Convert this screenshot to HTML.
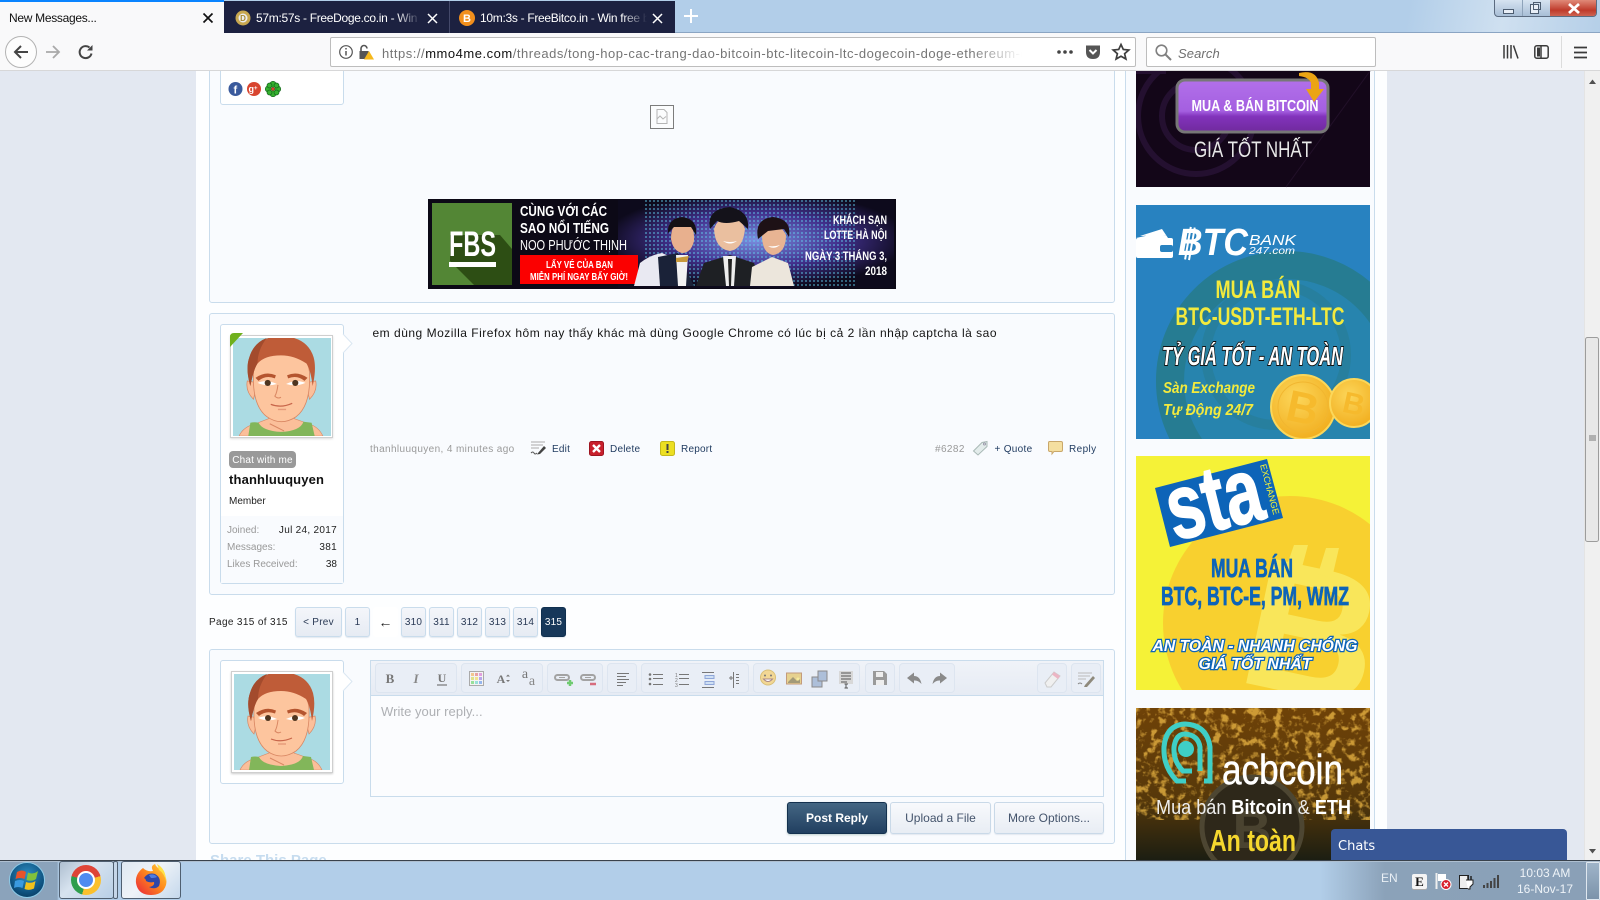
<!DOCTYPE html>
<html><head><meta charset="utf-8">
<style>
*{box-sizing:border-box;margin:0;padding:0}
html,body{width:1600px;height:900px;overflow:hidden;background:#e3e8f1;font-family:"Liberation Sans",Arial,sans-serif;}
.a{position:absolute;white-space:nowrap}
.box{position:absolute;background:#f9fbfe;border:1px solid #c9dcec;border-radius:3px}
.ubox{position:absolute;background:#fff;border:1px solid #c9dcec;border-radius:3px}
.pg{position:absolute;top:607px;height:30px;width:25px;border:1px solid #c9dcec;border-radius:3px;background:linear-gradient(#f4f6fa,#e6ebf3);text-align:center;font-size:11px;line-height:29px;color:#2a3a55;box-shadow:0 1px 1px #e2e8f0;letter-spacing:.15px}
.tg{position:absolute;top:663px;height:30px;border:1px solid #dde5f0;border-radius:4px;background:#e9eef6}
.btn{position:absolute;top:802px;height:32px;border:1px solid #c9d9e8;border-radius:3px;background:linear-gradient(#f8f9fc,#e8edf4);text-align:center;font-size:12px;line-height:30px;color:#44546c;box-shadow:0 1px 1px #e2e8f0}
svg{position:absolute;overflow:visible}
.n{font-family:"Liberation Sans Narrow","Liberation Sans",sans-serif}
.m{font-size:10px;line-height:14px;letter-spacing:.22px;color:#1f3a5f;top:443px}
</style></head><body>

<svg width="0" height="0" style="position:absolute"><defs>
<symbol id="av" viewBox="0 0 96 96" overflow="hidden">
<rect width="96" height="96" fill="#abdbe3"/>
<path d="M6 96Q10 87 22 84L35 79V66H60V79L74 84Q84 87 88 96Z" fill="#fbbf9a" stroke="#d98763" stroke-width=".6"/>
<path d="M15 96L17 83Q21 82 25 83Q29 91 47 92Q66 91 69 82L77 83L80 96Z" fill="#82b65a"/>
<path d="M36 84L50 91" stroke="#d98763" fill="none"/>
<path d="M14 42Q12 52 20 60L24 44ZM81 42Q83 52 75 60L71 44Z" fill="#fbbf9a" stroke="#d98763" stroke-width=".7"/>
<path d="M20 36Q19 66 33 77Q47 87 62 77Q76 66 75 36Q75 14 47 14Q20 14 20 36Z" fill="#fdc59e" stroke="#d98763" stroke-width=".8"/>
<path d="M17 47Q12 30 16 19Q22 -1 47 -2Q73 -1 79 19Q82 30 78 47Q76 31 72 25Q60 17 47 17Q31 17 24 25Q20 31 17 47Z" fill="#bf5c38"/>
<path d="M17 47Q12 30 16 19Q20 5 33 0Q24 12 24 25Q20 31 17 47Z" fill="#a34b2d"/>
<path d="M22 39Q32 32 42 36.500L41 39.500Q32 36 25 42ZM73 39Q63 32 53 36.500L54 39.500Q63 36 70 42Z" fill="#b5552f"/>
<path d="M24 44Q33 40 43 45Q33 48 24 44ZM71 44Q62 40 52 45Q62 48 71 44Z" fill="#fff"/>
<circle cx="34" cy="44" r="3" fill="#4e3520"/><circle cx="61" cy="44" r="3" fill="#4e3520"/>
<path d="M44 46Q43 54 41 57Q44 60 47 58" fill="none" stroke="#d98763"/>
<path d="M37 65Q47 69 58 64" fill="none" stroke="#c8664a" stroke-width="1.200"/>
<path d="M44 70H52" stroke="#e59a7a" stroke-width="1.400"/>
</symbol>
</defs></svg>

<!-- page content -->
<div class="a" style="left:196px;top:71px;width:1191px;height:789px;background:#fdfeff"></div>
<div class="box" style="left:209px;top:40px;width:906px;height:263px"></div>
<div class="ubox" style="left:220px;top:40px;width:124px;height:65px"></div>
<svg style="left:228px;top:81px" width="60" height="16">
<circle cx="7.500" cy="8" r="7" fill="#3a5a9c"/><text x="5.500" y="12.500" font-size="11" font-weight="bold" fill="#fff" font-family="Liberation Sans">f</text>
<circle cx="26" cy="8" r="7" fill="#d8452f"/><text x="20.500" y="11" font-size="9" font-weight="bold" fill="#fff" font-family="Liberation Sans">g<tspan font-size="6" dy="-2">+</tspan></text>
<g fill="#35b02f" stroke="#12651a" stroke-width=".7"><circle cx="45" cy="3.300" r="3"/><circle cx="45" cy="12.700" r="3"/><circle cx="40.300" cy="8" r="3"/><circle cx="49.700" cy="8" r="3"/><circle cx="41.500" cy="4.500" r="2.500"/><circle cx="48.500" cy="4.500" r="2.500"/><circle cx="41.500" cy="11.500" r="2.500"/><circle cx="48.500" cy="11.500" r="2.500"/></g><circle cx="45" cy="8" r="1.600" fill="#d8452f"/>
</svg>
<div class="a" style="left:650px;top:105px;width:24px;height:24px;border:1px solid #7c7c7c;background:#fbfcfd"></div>
<svg style="left:655px;top:109px" width="14" height="16" fill="none" stroke="#b5b5b5"><path d="M2 .5H9L12 3.500V14.500H2ZM2 10L5 7L8 10L11 7.500"/></svg>

<!-- FBS banner -->
<svg style="left:428px;top:199px" width="468" height="90" viewBox="0 0 468 90" font-family="Liberation Sans">
<defs><radialGradient id="fb" cx=".5" cy=".45" r=".55"><stop offset="0" stop-color="#7a8fe0"/><stop offset=".55" stop-color="#41308c"/><stop offset="1" stop-color="#0d0a1c"/></radialGradient>
<pattern id="dots" width="4" height="4" patternUnits="userSpaceOnUse"><circle cx="2" cy="2" r=".95" fill="#63d0f0" opacity=".8"/></pattern></defs>
<rect width="468" height="90" fill="#0c0916"/>
<rect x="190" y="1" width="276" height="88" fill="url(#fb)"/>
<rect x="216" y="1" width="212" height="88" fill="url(#dots)" opacity=".8"/>
<rect x="4" y="4" width="80" height="82" fill="#538635"/>
<path d="M22 36L72 36L84 50V86H46L22 62Z" fill="#2d4e14"/>
<text x="21" y="57" font-size="35" font-weight="bold" fill="#fff" class="n" textLength="47" lengthAdjust="spacingAndGlyphs">FBS</text>
<rect x="21" y="63" width="47" height="5" fill="#fff"/>
<g fill="#fff" class="n">
<text x="92" y="17" font-size="15" font-weight="bold" textLength="87" lengthAdjust="spacingAndGlyphs">CÙNG VỚI CÁC</text>
<text x="92" y="34" font-size="15" font-weight="bold" textLength="89" lengthAdjust="spacingAndGlyphs">SAO NỔI TIẾNG</text>
<text x="92" y="51" font-size="15" textLength="107" lengthAdjust="spacingAndGlyphs">NOO PHƯỚC THỊNH</text>
</g>
<rect x="92" y="56" width="118" height="29" fill="#fb0000"/>
<g fill="#fff" font-size="10" font-weight="bold" class="n">
<text x="118" y="69" textLength="67" lengthAdjust="spacingAndGlyphs">LẤY VÉ CỦA BẠN</text><text x="102" y="81" textLength="98" lengthAdjust="spacingAndGlyphs">MIỄN PHÍ NGAY BẤY GIỜ!</text></g>
<!-- people -->
<path d="M206 87L212 64Q222 56 234 54L248 60L250 87Z" fill="#e9e9f2"/>
<path d="M230 58L250 54L266 87H232Z" fill="#1a2238"/>
<path d="M248 56L260 56L258 87H250Z" fill="#f2f2f2"/>
<path d="M243 40Q243 22 255 22Q267 24 266 42Q263 54 254 54Q245 52 243 40Z" fill="#e8b08e"/><path d="M240 34Q239 20 254 18Q270 20 268 36L263 28H246Z" fill="#141014"/>
<path d="M248 59L261 57L259 63L248 63Z" fill="#c99a3c"/>
<path d="M268 87L276 64L302 56L326 64L336 87Z" fill="#1e2024"/>
<path d="M295 57L308 57L306 87H298Z" fill="#eee"/><path d="M300 60H304L303 87H301Z" fill="#222"/>
<path d="M286 30Q287 50 302 52Q315 50 317 30Q313 18 301 18Q290 18 286 30Z" fill="#eabf9f"/><path d="M282 30Q278 10 302 8Q322 12 320 30L311 22Q297 26 289 22Z" fill="#14121a"/>
<path d="M295 42Q302 47 309 42Q302 44 295 42Z" fill="#fff"/>
<path d="M322 87L324 68L344 58L360 64L366 87Z" fill="#ece6dc"/>
<path d="M334 36Q334 54 345 56Q358 54 358 36Q353 26 345 26Q338 26 334 36Z" fill="#e8b493"/><path d="M330 40Q326 20 345 18Q364 20 361 38L356 30L340 32Z" fill="#1d1116"/>
<path d="M340 47Q346 51 352 46Q346 48 340 47Z" fill="#fff"/>
<g fill="#fff" font-size="12" font-weight="bold" class="n">
<text x="405" y="25" textLength="54" lengthAdjust="spacingAndGlyphs">KHÁCH SẠN</text><text x="396" y="40" textLength="63" lengthAdjust="spacingAndGlyphs">LOTTE HÀ NỘI</text><text x="377" y="61" textLength="82" lengthAdjust="spacingAndGlyphs">NGÀY 3 THÁNG 3,</text><text x="437" y="76" textLength="22" lengthAdjust="spacingAndGlyphs">2018</text></g>
</svg>

<!-- post -->
<div class="box" style="left:209px;top:313px;width:906px;height:282px"></div>
<div class="ubox" style="left:220px;top:324px;width:124px;height:260px"></div>
<div class="a" style="left:221px;top:516px;width:122px;height:67px;background:#f9fbfe"></div>
<svg style="left:343px;top:334px" width="10" height="20"><path d="M0 0L9 9.500L0 19" fill="#fff" stroke="#dbe7f2"/></svg>
<div class="a" style="left:230px;top:335px;width:103px;height:103px;background:#fff;border:1px solid #cfcfcf;box-shadow:0 1px 2px #ddd"></div>
<svg style="left:233px;top:338px" width="98" height="98"><use href="#av" width="98" height="98"/></svg>
<svg style="left:230px;top:333px" width="14" height="14"><path d="M0 14V4Q0 0 4 0H13Z" fill="#6fb01d"/></svg>
<div class="a" style="left:229px;top:451px;width:67px;height:17px;background:#999;border-radius:4px;color:#fff;font-size:10px;line-height:19px;text-align:center;letter-spacing:.18px">Chat with me</div>
<div class="a" style="left:229px;top:472px;font-size:13px;font-weight:bold;line-height:16px;color:#111;letter-spacing:.15px">thanhluuquyen</div>
<div class="a" style="left:229px;top:495px;font-size:10px;line-height:13px;color:#222">Member</div>
<div class="a" style="left:227px;top:524px;font-size:10px;line-height:13px;color:#999">Joined:</div>
<div class="a" style="left:227px;top:541px;font-size:10px;line-height:13px;color:#999">Messages:</div>
<div class="a" style="left:227px;top:558px;font-size:10px;line-height:13px;color:#999">Likes Received:</div>
<div class="a" style="right:1263px;top:524px;font-size:10px;line-height:13px;color:#222;letter-spacing:.3px">Jul 24, 2017</div>
<div class="a" style="right:1263px;top:541px;font-size:10px;line-height:13px;color:#222;letter-spacing:.3px">381</div>
<div class="a" style="right:1263px;top:558px;font-size:10px;line-height:13px;color:#222">38</div>

<div class="a" style="left:372.500px;top:325px;font-size:12px;line-height:16px;color:#141414;letter-spacing:.505px;">em dùng Mozilla Firefox hôm nay thấy khác mà dùng Google Chrome có lúc bị cả 2 lần nhập captcha là sao</div>

<div class="a m" style="left:370px;color:#9a9a9a;letter-spacing:.38px">thanhluuquyen, 4 minutes ago</div>
<svg style="left:530px;top:441px" width="17" height="14"><path d="M1 1H15M1 4H13M1 7H9" stroke="#aaa"/><path d="M1 12Q3 10 4 12T7 12" fill="none" stroke="#555"/><path d="M8 12L14 5L16 7L10 13L7 13.500Z" fill="#444"/></svg>
<div class="a m" style="left:552px">Edit</div>
<svg style="left:589px;top:441px" width="15" height="15"><rect width="14" height="14" x=".5" y=".5" rx="2" fill="#c8202c" stroke="#9e1420"/><path d="M4 4L11 11M11 4L4 11" stroke="#fff" stroke-width="2.400"/></svg>
<div class="a m" style="left:610px">Delete</div>
<svg style="left:660px;top:441px" width="15" height="15"><rect width="14" height="14" x=".5" y=".5" rx="2" fill="#ecdf22" stroke="#c4b81c"/><rect x="6.500" y="3" width="2" height="6" fill="#444"/><rect x="6.500" y="10" width="2" height="2" fill="#444"/></svg>
<div class="a m" style="left:681px">Report</div>

<div class="a m" style="left:935px;color:#999;letter-spacing:.4px">#6282</div>
<svg style="left:972px;top:440px" width="17" height="16"><path d="M1.500 11L10 2.500L15 1.500L15 6.500L6 15Z" fill="#e3eceb" stroke="#a9b9b6"/><circle cx="12.500" cy="4" r="1" fill="#fff" stroke="#99a"/></svg>
<div class="a m" style="left:994.500px;letter-spacing:.3px">+ Quote</div>
<svg style="left:1048px;top:441px" width="15" height="14"><path d="M1.500 .5H13Q14.500 .5 14.500 2V9Q14.500 10.500 13 10.500H6L4 13V10.500H2Q.5 10.500 .5 9V2Q.5 .5 1.500 .5Z" fill="#f5dfa0" stroke="#c9a76a"/></svg>
<div class="a m" style="left:1069px;letter-spacing:.4px">Reply</div>

<!-- pager -->
<div class="a" style="left:209px;top:614px;font-size:10px;line-height:18px;color:#222;letter-spacing:.36px">Page 315 of 315</div>
<div class="pg" style="left:295px;width:47px;font-size:10px;letter-spacing:.25px">&lt; Prev</div>
<div class="pg" style="left:345px;font-size:10px">1</div>
<div class="pg" style="left:373px;background:#fff;border-color:#fff;box-shadow:none;font-size:14px;color:#222;font-weight:bold">←</div>
<div class="pg" style="left:401px;font-size:10px">310</div>
<div class="pg" style="left:429px;font-size:10px">311</div>
<div class="pg" style="left:457px;font-size:10px">312</div>
<div class="pg" style="left:485px;font-size:10px">313</div>
<div class="pg" style="left:513px;font-size:10px">314</div>
<div class="pg" style="left:541px;background:#17385a;border-color:#10304f;color:#fff;font-size:10px">315</div>

<!-- reply -->
<div class="box" style="left:209px;top:649px;width:906px;height:195px"></div>
<div class="ubox" style="left:220px;top:660px;width:124px;height:124px"></div>
<svg style="left:343px;top:672px" width="10" height="20"><path d="M0 0L9 9.500L0 19" fill="#fff" stroke="#dbe7f2"/></svg>
<div class="a" style="left:231px;top:671px;width:102px;height:102px;background:#fff;border:1px solid #cfcfcf;box-shadow:0 1px 2px #ccc"></div>
<svg style="left:234px;top:674px" width="96" height="96"><use href="#av" width="96" height="96"/></svg>
<div class="a" style="left:370px;top:660px;width:734px;height:137px;background:#fbfcfe;border:1px solid #c9dcec"></div>
<div class="a" style="left:371px;top:661px;width:732px;height:35px;background:linear-gradient(#f0f3f8,#e6ebf4);border-bottom:1px solid #c9dcec"></div>
<div class="tg" style="left:375px;width:82px"></div>
<div class="tg" style="left:461px;width:82px"></div>
<div class="tg" style="left:547px;width:56px"></div>
<div class="tg" style="left:607px;width:30px"></div>
<div class="tg" style="left:641px;width:108px"></div>
<div class="tg" style="left:753px;width:107px"></div>
<div class="tg" style="left:865px;width:30px"></div>
<div class="tg" style="left:899px;width:56px"></div>
<div class="tg" style="left:1037px;width:30px"></div>
<div class="tg" style="left:1071px;width:30px"></div>
<svg style="left:0;top:0" width="1600" height="900" font-family="Liberation Serif">
<text x="390" y="683" font-size="13" font-weight="bold" fill="#777" text-anchor="middle">B</text>
<text x="416" y="683" font-size="13" font-style="italic" font-weight="bold" fill="#888" text-anchor="middle">I</text>
<text x="442" y="682" font-size="12" font-weight="bold" fill="#777" text-anchor="middle">U</text><path d="M437 685H447" stroke="#777" stroke-width="1.200"/>
<rect x="469.500" y="671.500" width="14" height="14" fill="#f4f4f4" stroke="#aaa"/>
<g><rect x="471" y="673" width="3" height="3" fill="#f2c78f"/><rect x="475" y="673" width="3" height="3" fill="#e9a3a3"/><rect x="479" y="673" width="3" height="3" fill="#e2a0df"/><rect x="471" y="677" width="3" height="3" fill="#dfe28a"/><rect x="475" y="677" width="3" height="3" fill="#f3e38f"/><rect x="479" y="677" width="3" height="3" fill="#b8a6ea"/><rect x="471" y="681" width="3" height="3" fill="#98e09a"/><rect x="475" y="681" width="3" height="3" fill="#9ae0d8"/><rect x="479" y="681" width="3" height="3" fill="#95b6ee"/></g>
<text x="501" y="683" font-size="12" font-weight="bold" fill="#777" text-anchor="middle">A</text><path d="M506 676.500L508 674.500L510 676.500M506 680L508 682L510 680" fill="#777"/>
<text x="525" y="678" font-size="14" fill="#777" text-anchor="middle">a</text><text x="532" y="685" font-size="14" fill="#888" text-anchor="middle">a</text>
<g fill="none" stroke="#a3a3a3" stroke-width="2"><rect x="555" y="675" width="14" height="5" rx="2.500"/><rect x="581" y="675" width="14" height="5" rx="2.500"/><path d="M559 677.500H565M585 677.500H591" stroke-width="1"/></g>
<path d="M570 680V686M567 683H573" stroke="#6fcb70" stroke-width="2.500"/>
<path d="M590 684H596" stroke="#d76d7e" stroke-width="2.500"/>
<g stroke="#777"><path d="M617 673.500H629M617 676.500H626M617 679.500H629M617 682.500H626M617 685.500H623" fill="none"/>
<path d="M653 674.500H663M653 678.500H663M653 684.500H663M679 674.500H689M679 678.500H689M679 684.500H689M702 672.500H714M702 687.500H714M736 674.500H739M736 677.500H739M736 680.500H739M736 683.500H739" fill="none"/>
<path d="M729 678H733M731 676V680M733.500 672V688" fill="none"/></g>
<g fill="#777"><circle cx="650" cy="674.500" r="1.300"/><circle cx="650" cy="679" r="1.300"/><circle cx="650" cy="684" r="1.300"/></g>
<g font-family="Liberation Sans" font-size="5" fill="#777"><text x="675" y="677">1</text><text x="675" y="682">2</text><text x="675" y="687">3</text></g>
<path d="M705 675.500H714V678.500H705ZM705 681.500H714V684.500H705Z" fill="#cfe0f4" stroke="#8fa6d8"/>
<circle cx="768" cy="677.500" r="7.500" fill="#f2d795" stroke="#d9c078"/><circle cx="765" cy="675.500" r="1" fill="#777"/><circle cx="771" cy="675.500" r="1" fill="#777"/><path d="M763.500 679Q768 684 772.500 679Z" fill="#fff" stroke="#a88"/>
<rect x="786.500" y="673" width="15" height="11" fill="#e6d18f" stroke="#c39b7c"/><path d="M788 682L793 677L797 681L800 679V683H788Z" fill="#a39a78"/><circle cx="798" cy="679" r="1.500" fill="#f6eb9c"/>
<rect x="812" y="677" width="10" height="10" fill="#adbfd9" stroke="#8a8a8a"/><rect x="818" y="671" width="9" height="10" fill="#adbfd9" stroke="#8a8a8a"/>
<rect x="839" y="671" width="14" height="13" fill="#d8d8d8"/><path d="M841 673H851M841 676H851M841 679H851M841 682H847" stroke="#555"/><path d="M846 684V688M844.500 684H848M844.500 688H848" stroke="#555"/>
<path d="M873 671H884L887 674V685H873Z" fill="#9a9a9a"/><rect x="876" y="672" width="7" height="5" fill="#eee"/><rect x="876" y="680" width="8" height="5" fill="#eee"/>
<path d="M907 678L914 672.500V676Q920 676 921.500 684Q918 680 914 680.500V683.500Z" fill="#8a8a8a"/>
<path d="M947 678L940 672.500V676Q934 676 932.500 684Q936 680 940 680.500V683.500Z" fill="#8a8a8a"/>
<path d="M1045 683L1054 672L1060 676L1051 687H1047Z" fill="#f0f0f0" stroke="#ccc"/><path d="M1052 674.500L1054 672L1060 676L1058 679Z" fill="#ecb5c4"/>
<path d="M1078 673H1092M1078 676H1090M1078 679H1086" stroke="#bbb" fill="none"/><path d="M1078 684Q1080 682 1082 684" fill="none" stroke="#888"/><path d="M1085 685L1093 676L1095 678L1087 687L1084 687Z" fill="#8f8a7c"/>
</svg>
<div class="a" style="left:381px;top:704px;font-size:13px;line-height:16px;color:#aeb0b4;letter-spacing:.05px">Write your reply...</div>
<div class="btn" style="left:787px;width:100px;background:linear-gradient(#446683,#213f60);border-color:#14314f;color:#fff;font-weight:bold;box-shadow:0 1px 2px #bcc">Post Reply</div>
<div class="btn" style="left:890px;width:101px">Upload a File</div>
<div class="btn" style="left:994px;width:110px">More Options...</div>
<div class="a" style="left:210px;top:853px;font-size:15px;line-height:16px;font-weight:bold;color:#c6dcef">Share This Page</div>

<!-- sidebar -->
<div class="a" style="left:1125px;top:71px;width:250px;height:789px;background:#f9fbfe;border-left:1px solid #c9dcec;border-right:1px solid #c9dcec"></div>

<!-- banner 1 -->
<svg style="left:1136px;top:71px" width="234" height="116" viewBox="0 0 234 116" font-family="Liberation Sans">
<defs><clipPath id="c1"><rect width="234" height="116"/></clipPath><linearGradient id="pb" x1="0" y1="0" x2="0" y2="1"><stop offset="0" stop-color="#b270ea"/><stop offset=".6" stop-color="#a45fe0"/><stop offset=".7" stop-color="#8233bb"/><stop offset="1" stop-color="#702a9e"/></linearGradient></defs>
<rect width="234" height="116" fill="#130618"/>
<g clip-path="url(#c1)" fill="none" stroke="#241030" stroke-width="6"><circle cx="60" cy="45" r="58"/><circle cx="60" cy="45" r="34"/><path d="M0 0H30"/></g>
<path d="M150 116L234 0" stroke="#221029"/>
<rect x="41" y="9" width="151" height="52" rx="8" fill="url(#pb)" stroke="#777" stroke-width="3"/>
<text x="119" y="40" font-size="16" font-weight="bold" fill="#fff" text-anchor="middle" class="n" textLength="127" lengthAdjust="spacingAndGlyphs">MUA &amp; BÁN BITCOIN</text>
<path d="M163 2Q180 -2 183 12V18H188L178 31L170 18H175V12Q173 6 163 5Z" fill="#eba413"/>
<text x="117" y="86" font-size="22" fill="#e8e8e8" text-anchor="middle" class="n" textLength="118" lengthAdjust="spacingAndGlyphs">GIÁ TỐT NHẤT</text>
</svg>

<!-- banner 2 -->
<svg style="left:1136px;top:205px" width="234" height="234" viewBox="0 0 234 234" font-family="Liberation Sans">
<defs><clipPath id="c2"><rect width="234" height="234"/></clipPath>
<radialGradient id="coin" cx=".4" cy=".35" r=".7"><stop offset="0" stop-color="#fcd65a"/><stop offset="1" stop-color="#f1ad1d"/></radialGradient></defs>
<rect width="234" height="234" fill="#2882c0"/>
<g clip-path="url(#c2)">
<circle cx="150" cy="176" r="130" fill="#2784ae"/>
<circle cx="150" cy="176" r="116" fill="none" stroke="#267c92" stroke-width="28"/>
<circle cx="140" cy="150" r="70" fill="none" stroke="#277f9e" stroke-width="10"/>
<circle cx="167" cy="202" r="32" fill="url(#coin)" stroke="#fbd75a" stroke-width="2"/>
<circle cx="167" cy="202" r="25" fill="none" stroke="#f1b630"/>
<circle cx="218" cy="198" r="24" fill="url(#coin)" stroke="#fbd75a" stroke-width="2"/>
<text x="167" y="218" font-size="44" font-weight="bold" fill="#f6ba2d" text-anchor="middle" transform="rotate(12 167 202)">B</text>
<text x="218" y="209" font-size="30" font-weight="bold" fill="#f6ba2d" text-anchor="middle" transform="rotate(12 218 198)">B</text>
</g>
<path d="M4 31L26 24L30 30ZM0 33L28 27L32 33Z" fill="#fff"/>
<rect x="0" y="33" width="37" height="20" rx="2" fill="#fff"/><rect x="24" y="40" width="13" height="7" rx="2" fill="#2882c0"/>
<text x="42" y="50" font-size="38" font-weight="bold" font-style="italic" fill="#fff" textLength="70" lengthAdjust="spacingAndGlyphs">BTC</text>
<path d="M52 22V55M56 22V55" stroke="#fff" stroke-width="2" transform="rotate(10 54 38)"/>
<text x="113" y="40" font-size="15" fill="#fff" font-style="italic" textLength="47" lengthAdjust="spacingAndGlyphs">BANK</text>
<text x="113" y="49" font-size="10" fill="#fff" font-style="italic" textLength="46" lengthAdjust="spacingAndGlyphs">247.com</text>
<g fill="#f3ea3d" font-weight="bold" class="n" text-anchor="middle"><text x="122" y="93" font-size="25" textLength="85" lengthAdjust="spacingAndGlyphs">MUA BÁN</text>
<text x="124" y="120" font-size="25" textLength="169" lengthAdjust="spacingAndGlyphs">BTC-USDT-ETH-LTC</text></g>
<text x="26" y="160" font-size="26" font-weight="bold" font-style="italic" fill="#fff" stroke="#111" stroke-width="2" paint-order="stroke" class="n" textLength="181" lengthAdjust="spacingAndGlyphs">TỶ GIÁ TỐT - AN TOÀN</text>
<g fill="#f3ea3d" font-weight="bold" font-style="italic" font-size="16" class="n"><text x="27" y="188" textLength="92" lengthAdjust="spacingAndGlyphs">Sàn Exchange</text><text x="27" y="210" textLength="90" lengthAdjust="spacingAndGlyphs">Tự Động 24/7</text></g>
</svg>

<!-- banner 3 -->
<svg style="left:1136px;top:456px" width="234" height="234" viewBox="0 0 234 234" font-family="Liberation Sans">
<defs><clipPath id="c3"><rect width="234" height="234"/></clipPath></defs>
<rect width="234" height="234" fill="#f5f237"/>
<g clip-path="url(#c3)"><circle cx="154" cy="167" r="127" fill="#f8d02f"/>
<text x="178" y="240" font-size="185" font-weight="bold" fill="#f9e65a" text-anchor="middle" transform="rotate(12 178 170)">B</text>
<path d="M150 112L158 89H172L165 115ZM182 118L190 92H203L196 122Z" fill="#f9e65a"/></g>
<path d="M19 32L131 3L147 62L34 91Z" fill="#0d64b8"/>
<text x="79" y="74" font-size="92" font-weight="bold" fill="#fff" stroke="#fff" stroke-width="1.500" text-anchor="middle" transform="rotate(-14 79 49)" textLength="96" lengthAdjust="spacingAndGlyphs">sta</text>
<text x="124" y="9" font-size="9" fill="#f5f237" transform="rotate(75 124 9)" textLength="52" lengthAdjust="spacingAndGlyphs">EXCHANGE</text>
<g fill="#0d64b8" stroke="#0d64b8" stroke-width=".7" font-weight="bold" class="n" text-anchor="middle"><text x="116" y="121" font-size="26" textLength="82" lengthAdjust="spacingAndGlyphs">MUA BÁN</text><text x="119" y="149" font-size="26" textLength="188" lengthAdjust="spacingAndGlyphs">BTC, BTC-E, PM, WMZ</text></g>
<g fill="#fff" stroke="#0d64b8" stroke-width="2.500" paint-order="stroke" font-weight="bold" font-style="italic" font-size="16" text-anchor="middle"><text x="119" y="195" textLength="205" lengthAdjust="spacingAndGlyphs">AN TOÀN - NHANH CHÓNG</text><text x="119" y="213" textLength="113" lengthAdjust="spacingAndGlyphs">GIÁ TỐT NHẤT</text></g>
</svg>

<!-- banner 4 -->
<svg style="left:1136px;top:708px" width="234" height="152" viewBox="0 0 234 152" font-family="Liberation Sans">
<defs><filter id="nz" x="0" y="0" width="100%" height="100%"><feTurbulence type="fractalNoise" baseFrequency=".13" numOctaves="3" seed="4"/><feColorMatrix values="0 0 0 0 .85  0 0 0 0 .48  0 0 0 0 .06  3.500 3.500 0 0 -3.500"/></filter>
<linearGradient id="bg4" x1="0" y1="0" x2="0" y2="1"><stop offset="0" stop-color="#6f4208"/><stop offset=".6" stop-color="#56380a"/><stop offset="1" stop-color="#1c1e12"/></linearGradient>
<clipPath id="c4"><rect width="234" height="152"/></clipPath></defs>
<rect width="234" height="152" fill="url(#bg4)"/>
<g clip-path="url(#c4)"><rect x="0" y="0" width="234" height="112" filter="url(#nz)" opacity=".75"/>
<circle cx="116" cy="119" r="50" fill="#2e281a" stroke="#4d4632" stroke-width="5"/><text x="116" y="140" font-size="54" font-weight="bold" fill="#4a4330" text-anchor="middle">B</text></g>
<g transform="translate(21 1)"><g fill="none" stroke="#3fcfc6" stroke-width="5"><path d="M29 72H20Q6 58 7 38Q9 16 28 15Q50 16 53 38V72H47"/><path d="M35 62H26Q16 52 17 38Q19 25 28 25Q41 26 43 38V62"/></g><circle cx="29" cy="40" r="8" fill="#3fcfc6"/></g>
<text x="86" y="76" font-size="42" fill="#fff" stroke="#fff" stroke-width=".5" textLength="121" lengthAdjust="spacingAndGlyphs">acbcoin</text>
<text x="20" y="106" font-size="20" fill="#eee" textLength="195" lengthAdjust="spacingAndGlyphs">Mua bán <tspan font-weight="bold" fill="#fff">Bitcoin</tspan> &amp; <tspan font-weight="bold" fill="#fff">ETH</tspan></text>
<text x="117" y="143" font-size="31" font-weight="bold" fill="#f5d72e" text-anchor="middle" class="n" textLength="86" lengthAdjust="spacingAndGlyphs">An toàn</text>
</svg>

<!-- chats -->
<div class="a" style="left:1331px;top:829px;width:236px;height:31px;background:#385796;border-radius:4px 4px 0 0;color:#fff;font-family:'DejaVu Sans',sans-serif;font-size:13px;line-height:36px;padding-left:7px">Chats</div>

<!-- scrollbar -->
<div class="a" style="left:1584px;top:71px;width:16px;height:789px;background:#f0f0f0;border-left:1px solid #e4e4e4"></div>
<svg style="left:1584px;top:71px" width="16" height="789"><path d="M5 13L8.500 8.500L12 13Z" fill="#505050"/><path d="M5 778H12L8.500 782.500Z" fill="#505050"/>
<rect x="1.500" y="266.500" width="13" height="204" rx="2" fill="#e8e8e8" stroke="#9c9c9c"/><path d="M5 365H12M5 367H12M5 369H12" stroke="#777"/></svg>

<!-- browser chrome -->
<div class="a" style="left:0;top:0;width:1600px;height:33px;background:#b2cee9;border-bottom:1px solid #8ba5c3"></div>
<div class="a" style="left:1250px;top:0;width:350px;height:32px;background:linear-gradient(100deg,#b2cee9 45%,#cfe0f0 72%,#b5cfe8)"></div>
<div class="a" style="left:0;top:0;width:224px;height:34px;background:#f9f9fa;border-top:2px solid #0a84ff"></div>
<div class="a" style="left:224px;top:1px;width:451px;height:32px;background:#1c2140"></div>
<div class="a" style="left:449px;top:1px;width:1px;height:32px;background:#44496a"></div>
<div class="a" style="left:9px;top:10px;font-size:12px;line-height:16px;color:#111;letter-spacing:-.3px">New Messages...</div>
<svg style="left:202px;top:12px" width="12" height="12"><path d="M1.500 1.500L10.500 10.500M10.500 1.500L1.500 10.500" stroke="#111" stroke-width="1.700"/></svg>
<svg style="left:235px;top:10px" width="16" height="16"><circle cx="8" cy="8" r="7.500" fill="#c8a850"/><circle cx="8" cy="8" r="4.500" fill="#eee"/><text x="8" y="11" font-size="8" font-weight="bold" text-anchor="middle" fill="#a88a30" font-family="Liberation Sans">D</text></svg>
<div class="a" style="left:256px;top:10px;width:165px;overflow:hidden;font-size:12px;line-height:16px;color:#fff;letter-spacing:-.3px;-webkit-mask-image:linear-gradient(90deg,#000 85%,transparent)">57m:57s - FreeDoge.co.in - Win free</div>
<svg style="left:427px;top:13px" width="11" height="11"><path d="M1 1L10 10M10 1L1 10" stroke="#fff" stroke-width="1.500"/></svg>
<svg style="left:459px;top:10px" width="16" height="16"><circle cx="8" cy="8" r="8" fill="#f28f1c"/><text x="8" y="12" font-size="11" font-weight="bold" text-anchor="middle" fill="#fff" font-family="Liberation Sans">B</text></svg>
<div class="a" style="left:480px;top:10px;width:167px;overflow:hidden;font-size:12px;line-height:16px;color:#fff;letter-spacing:-.3px;-webkit-mask-image:linear-gradient(90deg,#000 85%,transparent)">10m:3s - FreeBitco.in - Win free bitcoin</div>
<svg style="left:652px;top:13px" width="11" height="11"><path d="M1 1L10 10M10 1L1 10" stroke="#fff" stroke-width="1.500"/></svg>
<svg style="left:684px;top:9px" width="14" height="14"><path d="M7 0V14M0 7H14" stroke="#fff" stroke-width="2"/></svg>

<!-- window controls -->
<div class="a" style="left:1494px;top:-1px;width:103px;height:18px;border:1px solid #5b6b80;border-radius:0 0 4px 4px;background:linear-gradient(#d6e3f1,#a8bed6);overflow:hidden">
<div class="a" style="left:55px;top:0;width:47px;height:17px;background:linear-gradient(#e08a78,#bf3b2b 60%,#d06a58)"></div>
<div class="a" style="left:27px;top:0;width:1px;height:17px;background:#8ea3ba"></div>
</div>
<div class="a" style="left:1503px;top:9px;width:11px;height:5px;background:#e8eef6;border:1px solid #4c5c70"></div>
<div class="a" style="left:1530px;top:4px;width:9px;height:10px;background:#e8eef6;border:1px solid #4c5c70"></div>
<div class="a" style="left:1533px;top:2px;width:8px;height:8px;border:1px solid #4c5c70"></div>
<svg style="left:1567px;top:3px" width="14" height="11"><path d="M2 1L12 10M12 1L2 10" stroke="#fff" stroke-width="2.800"/></svg>

<div class="a" style="left:0;top:33px;width:1600px;height:38px;background:#f9f9fa;border-bottom:1px solid #d7d7d8"></div>
<div class="a" style="left:5px;top:36px;width:32px;height:32px;border-radius:50%;background:#fdfdfd;border:1px solid #b3b3b3"></div>
<svg style="left:13px;top:44px" width="16" height="16" fill="none" stroke="#444" stroke-width="2"><path d="M15 8H2M8 2L2 8L8 14"/></svg>
<svg style="left:45px;top:44px" width="16" height="16" fill="none" stroke="#a9a9a9" stroke-width="1.800"><path d="M1 8H14M8 2L14 8L8 14"/></svg>
<svg style="left:78px;top:44px" width="16" height="16" fill="none" stroke="#444" stroke-width="2"><path d="M13.500 9.500A6 6 0 1 1 11.500 3.500"/><path d="M14.500 1V6.500H9Z" fill="#444" stroke="none"/></svg>
<div class="a" style="left:330px;top:37px;width:806px;height:30px;background:#fff;border:1px solid #bdbdbd;border-radius:2px"></div>
<svg style="left:339px;top:45px" width="14" height="14"><circle cx="7" cy="7" r="6.300" fill="none" stroke="#555" stroke-width="1.200"/><path d="M7 6V10.500M7 3V4.500" stroke="#555" stroke-width="1.500"/></svg>
<svg style="left:358px;top:44px" width="16" height="16"><path d="M3 7V4.500A3 3 0 0 1 9 4.500" fill="none" stroke="#555" stroke-width="1.600"/><rect x="1.500" y="7" width="9" height="8" fill="#555"/><path d="M11 7L16 15.500H6Z" fill="#f5b81c"/></svg>
<div class="a" style="left:382px;top:45px;width:640px;overflow:hidden;font-size:13px;line-height:17px;color:#757575;letter-spacing:.52px;-webkit-mask-image:linear-gradient(90deg,#000 92%,transparent)">https://<span style="color:#111">mmo4me.com</span>/threads/tong-hop-cac-trang-dao-bitcoin-btc-litecoin-ltc-dogecoin-doge-ethereum-eth</div>
<svg style="left:1056px;top:49px" width="18" height="6" fill="#444"><circle cx="3" cy="3" r="1.800"/><circle cx="9" cy="3" r="1.800"/><circle cx="15" cy="3" r="1.800"/></svg>
<svg style="left:1085px;top:44px" width="16" height="16"><path d="M1 1.500H15V8Q15 15 8 15Q1 15 1 8Z" fill="#555"/><path d="M4.500 6L8 9.500L11.500 6" fill="none" stroke="#fff" stroke-width="2"/></svg>
<svg style="left:1112px;top:43px" width="18" height="18"><path d="M9 1.500L11.300 6.500L16.800 7L12.600 10.700L13.900 16L9 13.200L4.100 16L5.400 10.700L1.200 7L6.700 6.500Z" fill="none" stroke="#3e3e3e" stroke-width="1.700"/></svg>
<div class="a" style="left:1146px;top:37px;width:230px;height:30px;background:#fff;border:1px solid #bdbdbd;border-radius:2px"></div>
<svg style="left:1155px;top:44px" width="17" height="17" fill="none" stroke="#808080" stroke-width="1.600"><circle cx="6.500" cy="6.500" r="5.300"/><path d="M10.500 10.500L16 16" stroke-width="2"/></svg>
<div class="a" style="left:1178px;top:46px;font-size:13px;line-height:16px;font-style:italic;color:#6f6f6f;letter-spacing:.1px">Search</div>
<svg style="left:1503px;top:45px" width="16" height="14" stroke="#3a3a3a" stroke-width="1.500" fill="none"><path d="M1 0V13.500M4.500 0V13.500M8 0V13.500M10.500 .5L15 13.500"/></svg>
<svg style="left:1534px;top:45px" width="15" height="14" fill="none" stroke="#3a3a3a" stroke-width="1.500"><rect x=".8" y=".8" width="13.400" height="12.400" rx="2"/><path d="M3 2.500H6V11.500H3Z" fill="#3a3a3a" stroke="none"/><path d="M7 1V13"/></svg>
<div class="a" style="left:1561px;top:36px;width:1px;height:32px;background:#dcdcdc"></div>
<svg style="left:1574px;top:46px" width="14" height="13" stroke="#3a3a3a" stroke-width="1.800"><path d="M0 1.500H13M0 6.500H13M0 11.500H13"/></svg>

<!-- taskbar -->
<div class="a" style="left:0;top:860px;width:1600px;height:40px;background:linear-gradient(90deg,#8ba3bb 0,#8ba3bb 57px,#b2cee9 59px,#b2cee9 1320px,#8ba2b9 1385px,#8aa0b7 100%);border-top:1px solid #39424c;box-shadow:inset 0 1px 0 #aebfd0"></div>
<div class="a" style="left:9px;top:862px;width:36px;height:36px;border-radius:50%;background:radial-gradient(circle at 50% 35%,#2e8fc4,#0d4f7c 65%,#072d4a);border:1px solid #8ccae8"></div>
<svg style="left:14px;top:867px" width="26" height="26"><path d="M3 5Q8 2 12 5L10.500 12Q6 10 1.500 12Z" fill="#e8532a"/><path d="M14 5.500Q19 8 24 4L22 12Q18 15 12.500 13Z" fill="#82c23c"/><path d="M1 14Q6 12 10 14L8.500 21Q4 19 0 21Z" fill="#3a9ae0"/><path d="M12 15Q17 17 21.500 14L20 21.500Q15 24 10.500 22Z" fill="#f2c21c"/></svg>
<div class="a" style="left:59px;top:861px;width:55px;height:38px;border:1px solid #4f5f70;border-radius:3px;background:linear-gradient(135deg,#aebfd0,#d7e3ef 40%,#b8cfe6);"></div>
<div class="a" style="left:113px;top:861px;width:5px;height:38px;border:1px solid #4f5f70;border-radius:2px;background:#c5d6e8"></div>
<div class="a" style="left:121px;top:861px;width:60px;height:38px;border:1px solid #4f5f70;border-radius:3px;background:linear-gradient(135deg,#dfe8f1,#eef3f8 45%,#c5d8ec);"></div>
<div class="a" style="left:71px;top:865px;width:30px;height:30px;border-radius:50%;background:conic-gradient(#de4437 0deg 75deg,#fbc02d 75deg 195deg,#2e9e4d 195deg 285deg,#de4437 285deg)"></div>
<div class="a" style="left:79px;top:873px;width:14px;height:14px;border-radius:50%;background:#4f8bf0;border:2px solid #fff;box-sizing:content-box;margin:-2px"></div>
<svg style="left:135px;top:864px" width="32" height="32"><defs><linearGradient id="ff" x1="1" y1="0" x2="0" y2="1"><stop offset="0" stop-color="#ffd43a"/><stop offset=".45" stop-color="#ff8a1c"/><stop offset="1" stop-color="#e8243c"/></linearGradient></defs>
<path d="M8 4Q12 8 18 7Q15 2 20 0Q21 3 26 6Q33 13 31 21Q28 31 16 31Q3 31 1 19Q0 10 8 4Z" fill="url(#ff)"/>
<path d="M9 14Q13 8 20 10Q27 14 24 22Q20 26 14 23Q20 22 19 18Q14 19 11 17Q11 15 9 14Z" fill="#2f47a8"/><path d="M14 11Q19 9 22 13Q20 14 16 14Z" fill="#4f7de0"/><path d="M22 0Q31 5 31 17Q29 9 24 6Z" fill="#ffe146"/></svg>

<!-- tray -->
<div class="a" style="left:1381px;top:871px;font-size:12px;line-height:14px;color:#e9eff5">EN</div>
<div class="a" style="left:1412px;top:874px;width:15px;height:15px;background:#f4f4f4;border-radius:2px;font-family:'Liberation Serif',serif;font-weight:bold;font-size:13px;line-height:15px;text-align:center;color:#111;box-shadow:0 1px 0 #aaa">E</div>
<svg style="left:1435px;top:873px" width="16" height="17"><path d="M1.500 0V16" stroke="#eee" stroke-width="2"/><path d="M3 1H11V8H3Z" fill="#fff"/><circle cx="11" cy="11.500" r="5" fill="#d8202c" stroke="#fff"/><path d="M9 9.500L13 13.500M13 9.500L9 13.500" stroke="#fff" stroke-width="1.400"/></svg>
<svg style="left:1459px;top:873px" width="15" height="17"><rect x=".5" y="2.500" width="9" height="13" fill="#eee" stroke="#222"/><path d="M7 7H14V11L11 14V16H9" fill="#fff" stroke="#222"/><path d="M9 3V7M12 3V7" stroke="#222" stroke-width="1.500"/></svg>
<svg style="left:1483px;top:875px" width="16" height="13" fill="#444"><rect x="0" y="10" width="2" height="3"/><rect x="3.500" y="8" width="2" height="5"/><rect x="7" y="6" width="2" height="7"/><rect x="10.500" y="3" width="2" height="10"/><rect x="14" y="0" width="2" height="13"/></svg>
<div class="a" style="left:1510px;top:866px;width:70px;text-align:center;font-size:12px;line-height:15px;color:#eef3f8">10:03 AM</div>
<div class="a" style="left:1510px;top:882px;width:70px;text-align:center;font-size:12px;line-height:15px;color:#eef3f8">16-Nov-17</div>
<div class="a" style="left:1586px;top:862px;width:14px;height:38px;background:linear-gradient(#9fb4c9,#7c93aa);border:1px solid #dfe7ef;border-radius:1px"></div>
</body></html>
